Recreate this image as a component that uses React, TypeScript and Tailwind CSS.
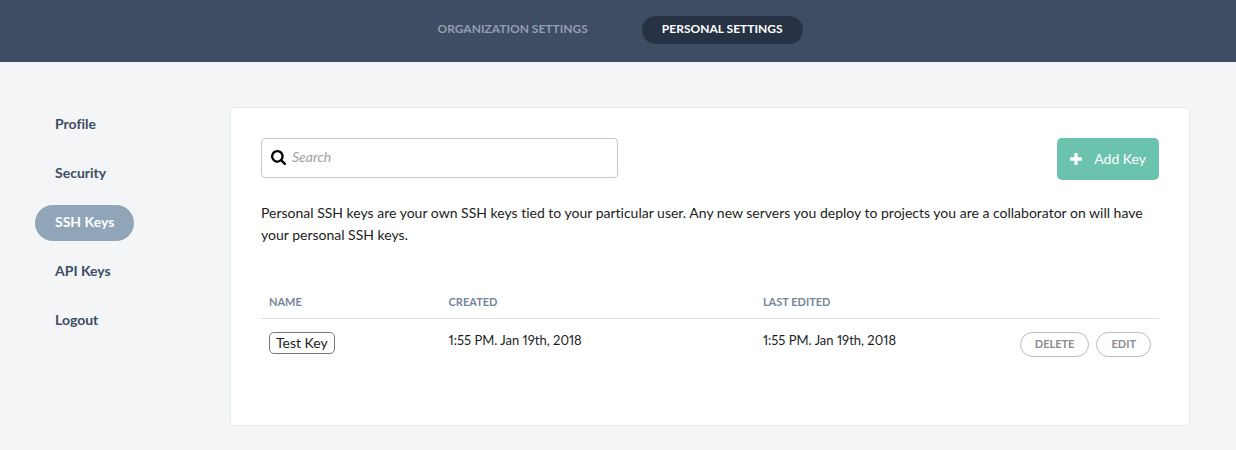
import React from "react";

const sections = ["Profile", "Security", "SSH Keys", "API Keys", "Logout"];

const keys = [
  { name: "Test Key", created: "1:55 PM. Jan 19th, 2018", edited: "1:55 PM. Jan 19th, 2018" },
];

function SearchIcon() {
  return (
    <svg viewBox="0 0 1664 1664" className="size-[15px] shrink-0 fill-black" aria-hidden="true">
      <path d="M1152 704q0-185-131.5-316.5T704 256 387.5 387.5 256 704t131.5 316.5T704 1152t316.5-131.5T1152 704zm512 832q0 52-38 90t-90 38q-54 0-90-38l-343-342q-179 124-399 124-143 0-273.5-55.5t-225-150-150-225T0 704t55.5-273.5 150-225 225-150T704 0t273.5 55.5 225 150 150 225T1408 704q0 220-124 399l343 343q37 37 37 90z" />
    </svg>
  );
}

function PlusIcon() {
  return (
    <svg viewBox="0 0 1408 1408" className="size-3 shrink-0 fill-white" aria-hidden="true">
      <path d="M1408 608v192q0 40-28 68t-68 28H896v416q0 40-28 68t-68 28H608q-40 0-68-28t-28-68V896H96q-40 0-68-28t-28-68V608q0-40 28-68t68-28h416V96q0-40 28-68t68-28h192q40 0 68 28t28 68v416h416q40 0 68 28t28 68z" />
    </svg>
  );
}

export default function App() {
  return (
    <div className="min-h-screen bg-[#f3f5f7] font-['Lato',sans-serif] text-sm text-[#1c1c1c] [font-variant-ligatures:none]">
      <nav className="flex justify-center gap-[34px] bg-[#3e4d63] pt-4 pr-4 pb-[18px] text-xs leading-[26px] font-bold">
        <a href="#organization" className="rounded-full px-5 pb-0.5 text-[#949eac]">ORGANIZATION SETTINGS</a>
        <a href="#personal" className="rounded-full bg-[#273344] px-5 pb-0.5 text-white">PERSONAL SETTINGS</a>
      </nav>

      <div className="flex items-start gap-5 pt-[45px] pr-[46px] pb-6 pl-[35px]">
        <aside className="flex w-[175px] shrink-0 flex-col items-start gap-[13px]">
          {sections.map((s) => (
            <a
              key={s}
              href={"#" + s.toLowerCase().replace(" ", "-")}
              className={
                s === "SSH Keys"
                  ? "rounded-full bg-[#91a5b9] px-5 pb-0.5 leading-[34px] font-bold text-white"
                  : "rounded-full px-5 pb-0.5 leading-[34px] font-bold text-[#3e4d63]"
              }
            >
              {s}
            </a>
          ))}
        </aside>

        <main className="min-w-0 grow rounded border border-[#e6e9ed] bg-white px-[30px] pt-[30px] pb-[68px]">
          <div className="flex items-start justify-between">
            <label className="flex h-10 w-[357px] items-center gap-[6px] rounded border border-[#c8c8c8] px-[9px] pb-0.5">
              <SearchIcon />
              <input
                type="text"
                aria-label="Search"
                placeholder="Search"
                className="min-w-0 grow bg-transparent outline-none placeholder:text-[#a0a0a0] placeholder:italic"
              />
            </label>
            <button type="button" className="flex h-[42px] items-center gap-3 rounded-[5px] bg-[#6bc3ad] px-[13px] text-white">
              <PlusIcon />
              Add Key
            </button>
          </div>

          <p className="mt-[22px] leading-[22px]">
            Personal SSH keys are your own SSH keys tied to your particular user. Any new servers you deploy to projects
            you are a collaborator on will have your personal SSH keys.
          </p>

          <table className="mt-[39px] w-full table-fixed border-collapse">
            <thead>
              <tr className="border-b border-[#e0e2e4] text-left text-[11px] leading-4 text-[#76859a]">
                <th className="w-[20%] px-2 pt-[9px] pb-2 font-bold">NAME</th>
                <th className="w-[35%] px-2 pt-[9px] pb-2 font-bold">CREATED</th>
                <th className="px-2 pt-[9px] pb-2 font-bold">LAST EDITED</th>
                <th className="w-[150px]" aria-label="Actions" />
              </tr>
            </thead>
            <tbody>
              {keys.map((k) => (
                <tr key={k.name} className="align-top">
                  <td className="px-2 pt-[13px]">
                    <span className="inline-block rounded-[5px] border border-[#777777] px-[6px] leading-5">{k.name}</span>
                  </td>
                  <td className="px-2 pt-3 text-[13px] leading-[18px] proportional-nums">{k.created}</td>
                  <td className="px-2 pt-3 text-[13px] leading-[18px] proportional-nums">{k.edited}</td>
                  <td className="pt-[13px] pr-2">
                    <div className="flex justify-end gap-[7px] text-[11px] leading-[21px] font-bold text-[#8c8c8c]">
                      <button type="button" className="rounded-full border border-[#bcbcbc] px-[14px] pb-0.5">DELETE</button>
                      <button type="button" className="rounded-full border border-[#bcbcbc] px-[14px] pb-0.5">EDIT</button>
                    </div>
                  </td>
                </tr>
              ))}
            </tbody>
          </table>
        </main>
      </div>
    </div>
  );
}
